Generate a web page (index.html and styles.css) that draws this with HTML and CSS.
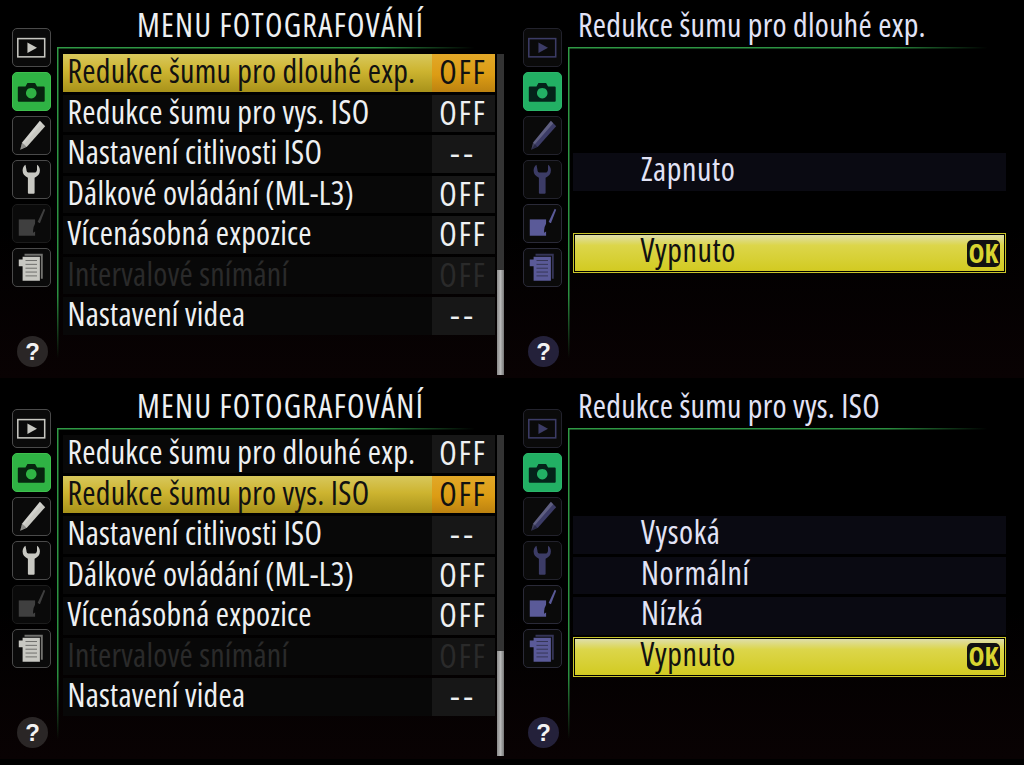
FILE: index.html
```html
<!DOCTYPE html>
<html lang="cs">
<head>
  <meta charset="UTF-8">
  <title>Menu fotografování</title>
  <link rel="stylesheet" href="styles.css">
</head>
<body>
  <svg class="icon-defs" width="0" height="0">
    <symbol id="i-play" viewBox="0 0 38 38">
      <rect x="5" y="10" width="28" height="19" fill="none" stroke="currentColor" stroke-width="1.6"/>
      <path d="M15 14l10 5.500-10 5.500z" fill="currentColor"/>
    </symbol>
    <symbol id="i-camera" viewBox="0 0 38 38">
      <path fill-rule="evenodd" d="M6 14h7l2-3.500h8l2 3.500h7q1 0 1 1v14q0 1-1 1H6q-1 0-1-1V15q0-1 1-1zM19 15.500a5.500 5.500 0 1 0 .01 0z" fill="currentColor"/>
    </symbol>
    <symbol id="i-pencil" viewBox="0 0 38 38">
      <path d="M28 4l5.500 5.500-19 21.500-7 3 2-7.500z" fill="currentColor"/>
      <path d="M28 4l2.500 2.500-19 21.500-4 6 2-7.500z" fill="#fff" opacity=".18"/>
      <path d="M9.500 26.500l4.500 4.500-7 3z" fill="#000" opacity=".3"/>
    </symbol>
    <symbol id="i-wrench" viewBox="0 0 38 38">
      <path d="M13 4q-3 2-3 6 0 5 5.500 7.500V33q0 1 1 1h5q1 0 1-1V17.500q5.500-2.500 5.500-7.500 0-4-3-6v5q-.5 3-3 3h-5q-3 0-3-3z" fill="currentColor"/>
    </symbol>
    <symbol id="i-brush" viewBox="0 0 38 38">
      <rect x="6" y="15" width="17" height="17" fill="currentColor"/>
      <path d="M32 4l1.500 1-5.500 14-2.500-1z" fill="currentColor"/>
      <path d="M24.500 17.500l3.500 1.500-1 6-6 4q-.5-7 3.500-11.500z" fill="#0a0a0a"/>
    </symbol>
    <symbol id="i-list" viewBox="0 0 38 38">
      <path d="M12 5h19v26h-2V7H12z" fill="currentColor" opacity=".55"/>
      <path d="M10 8h18v25H10V18H6v-7h4z" fill="currentColor"/>
      <path d="M13 12h12M13 16h12M13 20h12M13 24h12M13 28h12" stroke="#111" stroke-opacity=".5" stroke-width="1"/>
    </symbol>
  </svg>

  <main class="sheet">
    <!-- levy horni -->
    <section class="panel">
      <nav class="rail">
        <span class="tab"><svg><use href="#i-play"/></svg></span>
        <span class="tab tab-on"><svg><use href="#i-camera"/></svg></span>
        <span class="tab"><svg><use href="#i-pencil"/></svg></span>
        <span class="tab"><svg><use href="#i-wrench"/></svg></span>
        <span class="tab tab-off"><svg><use href="#i-brush"/></svg></span>
        <span class="tab"><svg><use href="#i-list"/></svg></span>
        <span class="help">?</span>
      </nav>
      <div class="content">
        <h1 class="title title-center">MENU FOTOGRAFOVÁNÍ</h1>
        <div class="frame">
          <ul class="menu">
            <li class="row row-sel"><span class="name">Redukce šumu pro dlouhé exp.</span><span class="val">OFF</span></li>
            <li class="row"><span class="name">Redukce šumu pro vys. ISO</span><span class="val">OFF</span></li>
            <li class="row"><span class="name">Nastavení citlivosti ISO</span><span class="val val-dash">--</span></li>
            <li class="row"><span class="name">Dálkové ovládání (ML-L3)</span><span class="val">OFF</span></li>
            <li class="row"><span class="name">Vícenásobná expozice</span><span class="val">OFF</span></li>
            <li class="row row-off"><span class="name">Intervalové snímání</span><span class="val">OFF</span></li>
            <li class="row"><span class="name">Nastavení videa</span><span class="val val-dash">--</span></li>
          </ul>
          <div class="scroll"><div class="thumb"></div></div>
        </div>
      </div>
    </section>

    <!-- pravy horni -->
    <section class="panel panel-sub">
      <nav class="rail">
        <span class="tab"><svg><use href="#i-play"/></svg></span>
        <span class="tab tab-on"><svg><use href="#i-camera"/></svg></span>
        <span class="tab"><svg><use href="#i-pencil"/></svg></span>
        <span class="tab"><svg><use href="#i-wrench"/></svg></span>
        <span class="tab"><svg><use href="#i-brush"/></svg></span>
        <span class="tab"><svg><use href="#i-list"/></svg></span>
        <span class="help">?</span>
      </nav>
      <div class="content">
        <h1 class="title">Redukce šumu pro dlouhé exp.</h1>
        <div class="frame">
          <ul class="options options-two">
            <li class="opt">Zapnuto</li>
            <li class="opt opt-gap"></li>
            <li class="opt opt-sel">Vypnuto<b class="ok">OK</b></li>
          </ul>
        </div>
      </div>
    </section>

    <!-- levy dolni -->
    <section class="panel">
      <nav class="rail">
        <span class="tab"><svg><use href="#i-play"/></svg></span>
        <span class="tab tab-on"><svg><use href="#i-camera"/></svg></span>
        <span class="tab"><svg><use href="#i-pencil"/></svg></span>
        <span class="tab"><svg><use href="#i-wrench"/></svg></span>
        <span class="tab tab-off"><svg><use href="#i-brush"/></svg></span>
        <span class="tab"><svg><use href="#i-list"/></svg></span>
        <span class="help">?</span>
      </nav>
      <div class="content">
        <h1 class="title title-center">MENU FOTOGRAFOVÁNÍ</h1>
        <div class="frame">
          <ul class="menu">
            <li class="row"><span class="name">Redukce šumu pro dlouhé exp.</span><span class="val">OFF</span></li>
            <li class="row row-sel"><span class="name">Redukce šumu pro vys. ISO</span><span class="val">OFF</span></li>
            <li class="row"><span class="name">Nastavení citlivosti ISO</span><span class="val val-dash">--</span></li>
            <li class="row"><span class="name">Dálkové ovládání (ML-L3)</span><span class="val">OFF</span></li>
            <li class="row"><span class="name">Vícenásobná expozice</span><span class="val">OFF</span></li>
            <li class="row row-off"><span class="name">Intervalové snímání</span><span class="val">OFF</span></li>
            <li class="row"><span class="name">Nastavení videa</span><span class="val val-dash">--</span></li>
          </ul>
          <div class="scroll"><div class="thumb"></div></div>
        </div>
      </div>
    </section>

    <!-- pravy dolni -->
    <section class="panel panel-sub">
      <nav class="rail">
        <span class="tab"><svg><use href="#i-play"/></svg></span>
        <span class="tab tab-on"><svg><use href="#i-camera"/></svg></span>
        <span class="tab"><svg><use href="#i-pencil"/></svg></span>
        <span class="tab"><svg><use href="#i-wrench"/></svg></span>
        <span class="tab"><svg><use href="#i-brush"/></svg></span>
        <span class="tab"><svg><use href="#i-list"/></svg></span>
        <span class="help">?</span>
      </nav>
      <div class="content">
        <h1 class="title">Redukce šumu pro vys. ISO</h1>
        <div class="frame">
          <ul class="options options-four">
            <li class="opt">Vysoká</li>
            <li class="opt">Normální</li>
            <li class="opt">Nízká</li>
            <li class="opt opt-sel">Vypnuto<b class="ok">OK</b></li>
          </ul>
        </div>
      </div>
    </section>
  </main>
</body>
</html>
```

FILE: styles.css
```css
* {
  box-sizing: border-box;
}

body {
  margin: 0;
  background-color: #000;
  color: #eef0f2;
  font-family: "Open Sans", sans-serif;
  font-stretch: 75%;
  letter-spacing: .25px;
}

.icon-defs {
  display: block;
  height: 0;
}

.sheet {
  display: grid;
  grid-template-columns: 511px 513px;
  grid-template-rows: 381px 384px;
  width: 1024px;
  height: 765px;
  overflow: hidden;
}

.panel {
  display: flex;
  height: 378px;
  padding: 0 0 0 12px;
  background: linear-gradient(180deg, #000 0, #000 60%, #090203 100%);
}

.panel-sub {
  color: #e2e3f6;
}

/* left icons */
.rail {
  display: flex;
  flex-direction: column;
  gap: 5.500px;
  width: 45px;
  flex-shrink: 0;
  padding-top: 28px;
}

.tab {
  display: block;
  width: 38.500px;
  height: 38.500px;
  border: 1.500px solid #4a4a4a;
  border-radius: 5px;
  color: #c8c8c2;
  background-color: #0a0a0a;
}

.tab svg {
  display: block;
  width: 100%;
  height: 100%;
}

.tab-on {
  border-color: #3fbf4e;
  background-color: #2fb344;
  color: #07240f;
}

.tab-off {
  border-color: #1c1c1c;
  color: #3f3f3f;
}

.panel-sub .tab {
  border-color: #22222c;
  color: #3c3c66;
}

.panel-sub .tab:nth-child(n+5) {
  border-color: #2a2a38;
  color: #5a5a98;
}

.panel-sub .tab-on {
  border-color: #2bb56a;
  background-color: #22b064;
  color: #04231a;
}

.help {
  display: block;
  width: 31px;
  height: 31px;
  margin: 44px 0 0 5px;
  border-radius: 50%;
  background-color: #2a2626;
  color: #f2f2f2;
  font: bold 24px/31px "Liberation Sans", sans-serif;
  letter-spacing: 0;
  text-align: center;
}

.panel-sub .help {
  background-color: #24213a;
}

/* title + green frame */
.content {
  display: flex;
  flex-direction: column;
  flex: 1;
  min-width: 0;
}

.title {
  height: 47px;
  margin: 0;
  padding: 7px 0 0 10px;
  font-size: 32px;
  font-weight: normal;
  line-height: 36px;
  white-space: nowrap;
}

.title-center {
  padding-left: 80px;
  letter-spacing: 1.300px;
}

.frame {
  display: flex;
  flex: 1;
  height: 331px;
  padding: 1.500px 0 0 1.500px;
  background:
    linear-gradient(90deg, #2f9a45 0, #2a8f40 70%, transparent 92%) top left / 100% 1.500px no-repeat,
    linear-gradient(180deg, #2f9a45 0, #2a8f40 75%, transparent 94%) top left / 1.500px 100% no-repeat;
}

/* menu list */
.menu {
  display: flex;
  flex-direction: column;
  gap: 3px;
  width: 432px;
  margin: 5.500px 0 0 4px;
  padding: 0;
  list-style: none;
}

.row {
  display: flex;
  height: 37.500px;
  background-color: #080808;
  font-size: 32px;
  line-height: 34px;
}

.name {
  flex: 1;
  padding-left: 5px;
  white-space: nowrap;
}

.val {
  width: 63px;
  background-color: #171717;
  line-height: 36px;
  letter-spacing: 2px;
  text-align: center;
}

.val-dash {
  font-stretch: 100%;
  letter-spacing: 3px;
}

.row-sel {
  color: #111;
  background: linear-gradient(180deg, #d8c85c 0, #cdb430 45%, #a8921a 100%);
}

.row-sel .val {
  background: linear-gradient(180deg, #e2a828 0, #dc9c14 55%, #bc8210 100%);
}

.row-off {
  color: #2a2a2a;
}

.row-off .val {
  background-color: #131313;
}

.scroll {
  width: 7px;
  height: 321px;
  margin: 5.500px 0 0 2px;
  background-color: #333;
}

.thumb {
  width: 100%;
  height: 105px;
  margin-top: 216px;
  background: linear-gradient(90deg, #8a8a8a, #b8b8b8 50%, #777);
}

/* option list */
.options {
  display: flex;
  flex-direction: column;
  gap: 3px;
  width: 433px;
  margin: 0 0 0 3.500px;
  padding: 0;
  list-style: none;
}

.options-two {
  padding-top: 104.500px;
}

.options-four {
  padding-top: 86.500px;
}

.opt {
  height: 37.500px;
  padding-left: 68px;
  background-color: #0a0a12;
  font-size: 32px;
  letter-spacing: .6px;
  line-height: 32px;
}

.opt-gap {
  background-color: transparent;
}

.opt-sel {
  display: flex;
  justify-content: space-between;
  align-items: center;
  height: 40px;
  margin-top: -1px;
  padding-left: 66.500px;
  padding-right: 5px;
  padding-bottom: 6px;
  color: #111;
  border: 1.500px solid #c9c52a;
  box-shadow: inset 0 0 0 1px #000;
  background: linear-gradient(180deg, #dfdfb4 0, #dcd64a 30%, #d2ca20 100%);
}

.ok {
  width: 33px;
  height: 27px;
  margin-bottom: -6px;
  border-radius: 5px;
  background-color: #111;
  color: #d8d430;
  font-size: 27px;
  font-weight: bold;
  letter-spacing: 0;
  line-height: 26px;
  text-align: center;
}
```
